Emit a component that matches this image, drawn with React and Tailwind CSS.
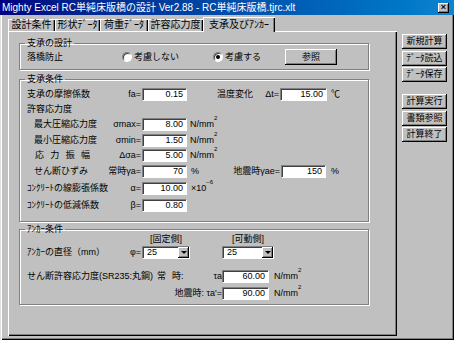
import React from "react";

function Input({ value, className = "w-[45px]" }) {
  return (
    <div
      className={`h-[13px] bg-white border border-[#808080] border-r-white border-b-white shadow-[inset_1px_1px_0_#404040] flex items-center justify-end pr-[3px] ${className}`}
    >
      {value}
    </div>
  );
}

function Select({ value, className = "w-[48px]" }) {
  return (
    <div
      className={`h-[13px] bg-white border border-[#808080] border-r-white border-b-white shadow-[inset_1px_1px_0_#404040] flex items-center pl-[4px] ${className}`}
    >
      <span className="flex-1">{value}</span>
      <span className="w-[11px] h-[11px] bg-[#c0c0c0] shadow-[inset_-1px_-1px_0_#000,inset_1px_1px_0_#fff,inset_-2px_-2px_0_#808080] flex items-center justify-center">
        <span className="w-0 h-0 border-l-[3px] border-r-[3px] border-t-[3px] border-l-transparent border-r-transparent border-t-black" />
      </span>
    </div>
  );
}

function Btn({ children, className = "" }) {
  return (
    <div
      className={`bg-[#c0c0c0] shadow-[inset_-1px_-1px_0_#000,inset_1px_1px_0_#fff,inset_-2px_-2px_0_#808080] flex items-center justify-center ${className}`}
    >
      {children}
    </div>
  );
}

function Radio({ checked }) {
  return (
    <span className="w-[10px] h-[10px] rounded-full bg-white border border-[#808080] border-r-white border-b-white shadow-[inset_1px_1px_0_#404040] flex items-center justify-center">
      {checked && <span className="w-[4px] h-[4px] rounded-full bg-black" />}
    </span>
  );
}

function Group({ title, className = "", children }) {
  return (
    <fieldset
      className={`w-[350px] border border-[#808080] shadow-[1px_1px_0_#fff,inset_1px_1px_0_#fff] px-[7px] ${className}`}
    >
      <legend className="ml-[-2px] px-[2px] h-[10px] leading-[10px]">{title}</legend>
      {children}
    </fieldset>
  );
}

function Row({ className = "", children }) {
  return <div className={`flex items-center h-[13px] ${className}`}>{children}</div>;
}

function Unit() {
  return (
    <span>
      N/mm<sup className="text-[6px] align-super">2</sup>
    </span>
  );
}

const TABS = [
  { label: "設計条件", w: "w-[47px]" },
  { label: "形状ﾃﾞｰﾀ", w: "w-[45px]" },
  { label: "荷重ﾃﾞｰﾀ", w: "w-[48px]" },
  { label: "許容応力度", w: "w-[55px]" },
];

export default function App() {
  return (
    <div className="w-[454px] h-[340px] bg-[#c0c0c0] text-black text-[9px] leading-none font-['Liberation_Sans','Noto_Sans_CJK_JP',sans-serif] overflow-hidden shadow-[inset_1px_1px_0_#dfdfdf,inset_2px_2px_0_#fff,inset_-1px_-1px_0_#000,inset_-2px_-2px_0_#808080]">
      {/* title bar */}
      <div className="h-[15px] bg-linear-to-r from-[#000080] to-[#1084d0] flex items-center pl-[2px] pr-[5px] text-white">
        <span className="flex-1 whitespace-nowrap text-[10px]">Mighty Excel RC単純床版橋の設計 Ver2.88 - RC単純床版橋.tjrc.xlt</span>
        <Btn className="w-[11px] h-[10px] text-black text-[9px] font-bold">×</Btn>
      </div>

      <div className="flex">
        <div className="ml-[8px] w-[389px] flex flex-col">
          {/* tabs */}
          <div className="mt-[2px] h-[14px] flex items-end">
            {TABS.map((t) => (
              <div
                key={t.label}
                className={`${t.w} h-[12px] flex items-center justify-center shadow-[inset_1px_1px_0_#fff,inset_-1px_0_0_#000,inset_-2px_0_0_#808080] text-[10px]`}
              >
                {t.label}
              </div>
            ))}
            <div className="w-[72px] h-[15px] -mb-[1px] relative z-10 bg-[#c0c0c0] flex items-center justify-center shadow-[inset_1px_1px_0_#fff,inset_-1px_0_0_#000,inset_-2px_0_0_#808080] text-[10px]">
              支承及びｱﾝｶｰ
            </div>
          </div>

          {/* panel */}
          <div className="h-[305px] pl-[11px] shadow-[inset_1px_1px_0_#fff,inset_-1px_-1px_0_#000,inset_-2px_-2px_0_#808080]">
            <Group title="支承の設計" className="mt-[7px] h-[32px]">
              <div className="flex items-center h-[16px] mt-[1px]">
                <span className="w-[95px]">落橋防止</span>
                <div className="w-[91px] flex items-center">
                  <Radio />
                  <span className="ml-[2px]">考慮しない</span>
                </div>
                <div className="w-[72px] flex items-center">
                  <Radio checked />
                  <span className="ml-[2px]">考慮する</span>
                </div>
                <Btn className="w-[52px] h-[16px]">参照</Btn>
              </div>
            </Group>

            <Group title="支承条件" className="mt-[4px] pb-[9px]">
              <Row className="mt-[4px]">
                <span className="w-[114px] flex justify-between">
                  <span>支承の摩擦係数</span>
                  <span>fa=</span>
                </span>
                <Input value="0.15" className="ml-[1px] w-[45px]" />
                <span className="w-[92px] pl-[30px] flex justify-between">
                  <span>温度変化</span>
                  <span>Δt=</span>
                </span>
                <Input value="15.00" className="ml-[1px] w-[47px]" />
                <span className="ml-[4px]">℃</span>
              </Row>
              <Row className="mt-[2px]">
                <span>許容応力度</span>
              </Row>
              <Row className="mt-[2px]">
                <span className="w-[114px] flex justify-between pl-[7px]">
                  <span>最大圧縮応力度</span>
                  <span>σmax=</span>
                </span>
                <Input value="8.00" className="ml-[1px] w-[45px]" />
                <span className="ml-[3px]">
                  <Unit />
                </span>
              </Row>
              <Row className="mt-[3px]">
                <span className="w-[114px] flex justify-between pl-[7px]">
                  <span>最小圧縮応力度</span>
                  <span>σmin=</span>
                </span>
                <Input value="1.50" className="ml-[1px] w-[45px]" />
                <span className="ml-[3px]">
                  <Unit />
                </span>
              </Row>
              <Row className="mt-[2px]">
                <span className="w-[114px] flex justify-between pl-[8px]">
                  <span className="w-[55px] flex justify-between">
                    <span>応</span>
                    <span>力</span>
                    <span>振</span>
                    <span>幅</span>
                  </span>
                  <span>Δσa=</span>
                </span>
                <Input value="5.00" className="ml-[1px] w-[45px]" />
                <span className="ml-[3px]">
                  <Unit />
                </span>
              </Row>
              <Row className="mt-[3px]">
                <span className="w-[114px] flex justify-between pl-[7px]">
                  <span>せん断ひずみ</span>
                  <span>常時γa=</span>
                </span>
                <Input value="70" className="ml-[1px] w-[45px]" />
                <span className="w-[40px] pl-[4px]">%</span>
                <span className="w-[53px] text-right">地震時γae=</span>
                <Input value="150" className="ml-[1px] w-[45px]" />
                <span className="ml-[5px]">%</span>
              </Row>
              <Row className="mt-[4px]">
                <span className="w-[114px] flex justify-between">
                  <span>ｺﾝｸﾘｰﾄの線膨張係数</span>
                  <span>α=</span>
                </span>
                <Input value="10.00" className="ml-[1px] w-[45px]" />
                <span className="ml-[4px]">
                  ×10<sup className="text-[6px] align-super">−6</sup>
                </span>
              </Row>
              <Row className="mt-[4px]">
                <span className="w-[114px] flex justify-between">
                  <span>ｺﾝｸﾘｰﾄの低減係数</span>
                  <span>β=</span>
                </span>
                <Input value="0.80" className="ml-[1px] w-[45px]" />
              </Row>
            </Group>

            <Group title="ｱﾝｶｰ条件" className="mt-[2px] pb-[4px]">
              <div className="flex items-center h-[10px]">
                <span className="w-[115px]" />
                <span className="w-[48px] text-center">[固定側]</span>
                <span className="w-[32px]" />
                <span className="w-[52px] text-center">[可動側]</span>
              </div>
              <Row className="mt-[2px]">
                <span className="w-[114px] flex justify-between">
                  <span>ｱﾝｶｰの直径（mm）</span>
                  <span>φ=</span>
                </span>
                <Select value="25" className="ml-[1px] w-[48px]" />
                <Select value="25" className="ml-[32px] w-[52px]" />
              </Row>
              <Row className="mt-[11px]">
                <span className="w-[195px] flex items-center">
                  <span>せん断許容応力度(SR235:丸鋼)</span>
                  <span className="ml-[4px]">常</span>
                  <span className="ml-[6px]">時:</span>
                  <span className="ml-auto">τa</span>
                </span>
                <Input value="60.00" className="w-[47px]" />
                <span className="ml-[5px]">
                  <Unit />
                </span>
              </Row>
              <Row className="mt-[4px]">
                <span className="w-[195px] text-right">地震時: τa'=</span>
                <Input value="90.00" className="w-[47px]" />
                <span className="ml-[5px]">
                  <Unit />
                </span>
              </Row>
            </Group>
          </div>
        </div>

        {/* right buttons */}
        <div className="ml-[5px] mt-[19px] w-[45px] flex flex-col">
          <Btn className="h-[15px]">新規計算</Btn>
          <Btn className="h-[15px] mt-[2px]">ﾃﾞｰﾀ読込</Btn>
          <Btn className="h-[15px] mt-[1px]">ﾃﾞｰﾀ保存</Btn>
          <Btn className="h-[15px] mt-[12px]">計算実行</Btn>
          <Btn className="h-[15px] mt-[2px]">書類参照</Btn>
          <Btn className="h-[15px] mt-[1px]">計算終了</Btn>
        </div>
      </div>
    </div>
  );
}
